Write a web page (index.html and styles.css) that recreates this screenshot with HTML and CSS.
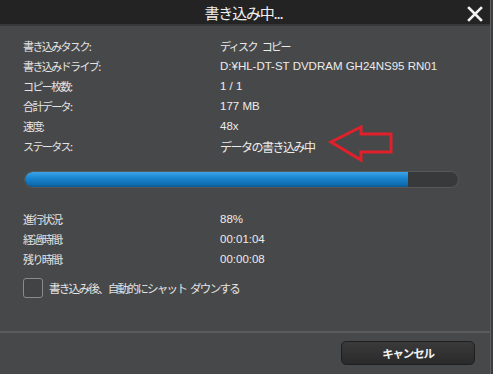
FILE: index.html
```html
<!DOCTYPE html>
<html lang="ja">
<head>
<meta charset="utf-8">
<link rel="stylesheet" href="styles.css">
</head>
<body>
<div class="window">
  <header class="titlebar">
    <span class="title">書き込み中...</span>
    <svg class="close" width="16" height="16" viewBox="0 0 16 16"><path d="M2 2 L14 14 M14 2 L2 14" stroke="#f2f2f2" stroke-width="2.6" stroke-linecap="square"/></svg>
  </header>
  <main class="content">
    <div class="info">
      <span class="label">書き込みタスク:</span><span class="value cjk">ディスク コピー</span>
      <span class="label">書き込みドライブ:</span><span class="value">D:¥HL-DT-ST DVDRAM GH24NS95 RN01</span>
      <span class="label">コピー枚数:</span><span class="value">1 / 1</span>
      <span class="label">合計データ:</span><span class="value">177 MB</span>
      <span class="label">速度:</span><span class="value">48x</span>
      <span class="label">ステータス:</span><span class="value status">データの書き込み中
        <svg class="arrow" width="70" height="38" viewBox="0 0 70 38"><path d="M3 17 L33 2 L33 9 L63 9 L63 27 L33 27 L33 35 Z" fill="none" stroke="#e0202a" stroke-width="3" stroke-linejoin="miter"/></svg>
      </span>
    </div>
    <div class="progress"><div class="fill" style="width:88.5%"></div></div>
    <div class="info">
      <span class="label">進行状況:</span><span class="value">88%</span>
      <span class="label">経過時間:</span><span class="value">00:01:04</span>
      <span class="label">残り時間:</span><span class="value">00:00:08</span>
    </div>
    <label class="check"><span class="box"></span><span>書き込み後、自動的にシャット ダウンする</span></label>
  </main>
  <footer class="footer">
    <button class="cancel">キャンセル</button>
  </footer>
</div>
</body>
</html>
```
FILE: styles.css
```css
* { box-sizing: border-box; }
html, body { margin: 0; padding: 0; }
body {
  width: 493px;
  height: 374px;
  background: #3c3d3e;
  font-family: "Noto Sans CJK JP", "Liberation Sans", sans-serif;
  color: #e6e6e6;
  overflow: hidden;
}
.window {
  width: 491px;
  height: 374px;
  background: #474849;
  border-right: 1px solid #5e5f60;
  display: flex;
  flex-direction: column;
}
.titlebar {
  height: 26px;
  background: #232323;
  border-bottom: 2px solid #383838;
  display: flex;
  align-items: center;
  justify-content: center;
  position: relative;
}
.title {
  font-size: 15px;
  color: #f0f0f0;
  letter-spacing: -1.2px;
  margin-right: 3px;
}
.close {
  position: absolute;
  right: 7px;
  top: 6px;
}
.content {
  padding: 10px 0 0 23px;
  flex: 1;
}
.info {
  display: grid;
  grid-template-columns: 197px 1fr;
  grid-auto-rows: 20px;
  align-items: center;
  font-size: 11px;
}
.label {
  letter-spacing: -1.6px;
  color: #e4e4e4;
}
.value {
  font-family: "Liberation Sans", "Noto Sans CJK JP", sans-serif;
  font-size: 11.5px;
  color: #ececec;
}
.value.cjk {
  font-family: "Noto Sans CJK JP", sans-serif;
  font-size: 11px;
  letter-spacing: -1.6px;
  word-spacing: 4px;
}
.status {
  font-family: "Noto Sans CJK JP", sans-serif;
  font-size: 12px;
  letter-spacing: -1.5px;
  position: relative;
}
.arrow {
  position: absolute;
  left: 108px;
  top: -13px;
}
.progress {
  margin: 15px 0 21px 1px;
  width: 435px;
  height: 17px;
  border-radius: 9px;
  background: #38393a;
  border: 1px solid #575859;
  overflow: hidden;
}
.fill {
  height: 100%;
  border-radius: 8px 0 0 8px;
  background: linear-gradient(#3ba3e8 0%, #1a86d0 40%, #0f6fb4 80%, #0b5a92 100%);
}
.check {
  display: flex;
  align-items: center;
  gap: 6px;
  margin-top: 9px;
  font-size: 11.5px;
  letter-spacing: -1.7px;
  word-spacing: 3px;
  color: #e4e4e4;
}
.box {
  width: 20px;
  height: 20px;
  border: 1px solid #8a8a8a;
  border-radius: 3px;
  background: #424344;
}
.footer {
  height: 43px;
  border-top: 2px solid #5a5b5c;
  display: flex;
  justify-content: flex-end;
  padding: 8px 15px 0 0;
}
.cancel {
  width: 134px;
  height: 24px;
  border-radius: 5px;
  border: 1px solid #1f1f1f;
  background: linear-gradient(#3a3a3b, #2a2a2b);
  color: #f2f2f2;
  font-family: "Noto Sans CJK JP", sans-serif;
  font-size: 11.5px;
  font-weight: bold;
  letter-spacing: -1.2px;
  padding: 0;
}
```
